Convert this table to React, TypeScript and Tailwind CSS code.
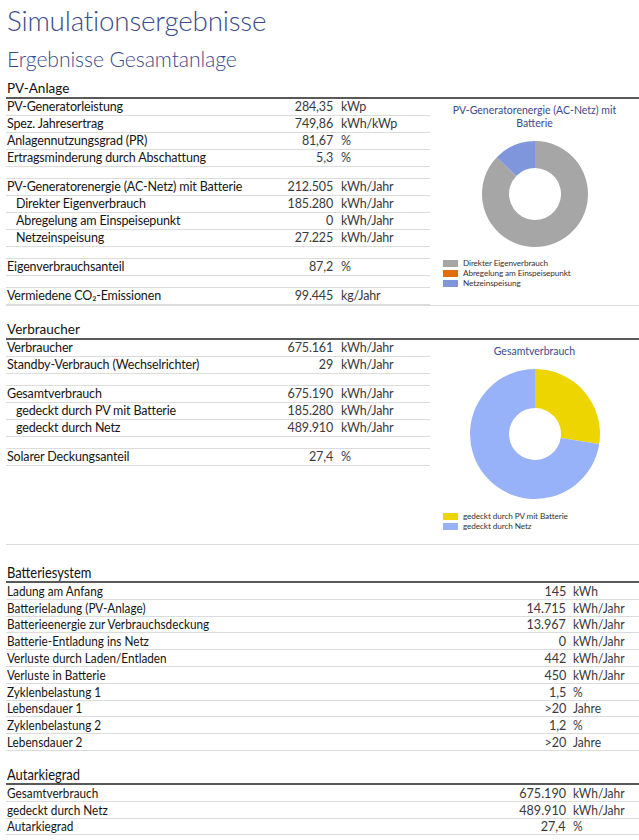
import React from "react"

type Row = { label: string; value: string; unit: string; indent?: boolean } | "gap"

const PV_ROWS: Row[] = [
  { label: "PV-Generatorleistung", value: "284,35", unit: "kWp" },
  { label: "Spez. Jahresertrag", value: "749,86", unit: "kWh/kWp" },
  { label: "Anlagennutzungsgrad (PR)", value: "81,67", unit: "%" },
  { label: "Ertragsminderung durch Abschattung", value: "5,3", unit: "%" },
  "gap",
  { label: "PV-Generatorenergie (AC-Netz) mit Batterie", value: "212.505", unit: "kWh/Jahr" },
  { label: "Direkter Eigenverbrauch", value: "185.280", unit: "kWh/Jahr", indent: true },
  { label: "Abregelung am Einspeisepunkt", value: "0", unit: "kWh/Jahr", indent: true },
  { label: "Netzeinspeisung", value: "27.225", unit: "kWh/Jahr", indent: true },
  "gap",
  { label: "Eigenverbrauchsanteil", value: "87,2", unit: "%" },
  "gap",
  { label: "Vermiedene CO₂-Emissionen", value: "99.445", unit: "kg/Jahr" },
]

const VERBRAUCHER_ROWS: Row[] = [
  { label: "Verbraucher", value: "675.161", unit: "kWh/Jahr" },
  { label: "Standby-Verbrauch (Wechselrichter)", value: "29", unit: "kWh/Jahr" },
  "gap",
  { label: "Gesamtverbrauch", value: "675.190", unit: "kWh/Jahr" },
  { label: "gedeckt durch PV mit Batterie", value: "185.280", unit: "kWh/Jahr", indent: true },
  { label: "gedeckt durch Netz", value: "489.910", unit: "kWh/Jahr", indent: true },
  "gap",
  { label: "Solarer Deckungsanteil", value: "27,4", unit: "%" },
]

const BATTERIE_ROWS = [
  { label: "Ladung am Anfang", value: "145", unit: "kWh" },
  { label: "Batterieladung (PV-Anlage)", value: "14.715", unit: "kWh/Jahr" },
  { label: "Batterieenergie zur Verbrauchsdeckung", value: "13.967", unit: "kWh/Jahr" },
  { label: "Batterie-Entladung ins Netz", value: "0", unit: "kWh/Jahr" },
  { label: "Verluste durch Laden/Entladen", value: "442", unit: "kWh/Jahr" },
  { label: "Verluste in Batterie", value: "450", unit: "kWh/Jahr" },
  { label: "Zyklenbelastung 1", value: "1,5", unit: "%" },
  { label: "Lebensdauer 1", value: ">20", unit: "Jahre" },
  { label: "Zyklenbelastung 2", value: "1,2", unit: "%" },
  { label: "Lebensdauer 2", value: ">20", unit: "Jahre" },
]

const AUTARKIE_ROWS = [
  { label: "Gesamtverbrauch", value: "675.190", unit: "kWh/Jahr" },
  { label: "gedeckt durch Netz", value: "489.910", unit: "kWh/Jahr" },
  { label: "Autarkiegrad", value: "27,4", unit: "%" },
]

function SectionHeading({ title, narrow }: { title: string; narrow?: boolean }) {
  return (
    <div className="border-b-2 border-[#595959] h-[19px] flex items-end pl-px">
      <span
        className={
          narrow
            ? "text-[15px] leading-[17px] text-[#111] origin-left scale-x-[0.86] inline-block whitespace-nowrap"
            : "text-[13.5px] leading-[17px] text-[#111]"
        }
      >
        {title}
      </span>
    </div>
  )
}

function WideTable({ rows }: { rows: Row[] }) {
  return (
    <div className="w-[424px]">
      {rows.map((r, i) =>
        r === "gap" ? (
          <div key={i} className="h-[12px] border-b border-[#dcdcdc]" />
        ) : (
          <div
            key={i}
            className="h-[17px] border-b border-[#dcdcdc] flex items-center text-[12.5px] tracking-[-0.15px] leading-none"
          >
            <span className={"flex-1 text-[#151515] " + (r.indent ? "pl-[10px]" : "pl-px")}>{r.label}</span>
            <span className="w-[80px] text-right text-[#3a3a3a]">{r.value}</span>
            <span className="w-[97px] pl-[8px] text-[#3a3a3a]">{r.unit}</span>
          </div>
        )
      )}
    </div>
  )
}

function NarrowTable({ rows }: { rows: { label: string; value: string; unit: string }[] }) {
  return (
    <div>
      {rows.map((r, i) => (
        <div key={i} className="h-[16.8px] border-b border-[#dcdcdc] flex items-center text-[14px] leading-none">
          <span className="flex-1 pl-px">
            <span className="inline-block origin-left scale-x-[0.84] whitespace-nowrap text-[#151515]">{r.label}</span>
          </span>
          <span className="w-[80px] text-right">
            <span className="inline-block origin-right scale-x-[0.9] whitespace-nowrap text-[#3a3a3a]">{r.value}</span>
          </span>
          <span className="w-[73px] pl-[7px]">
            <span className="inline-block origin-left scale-x-[0.86] whitespace-nowrap text-[#3a3a3a]">{r.unit}</span>
          </span>
        </div>
      ))}
    </div>
  )
}

type Slice = { value: number; color: string }

function Donut({ r, ir, slices }: { r: number; ir: number; slices: Slice[] }) {
  const size = r * 2 + 2
  const c = size / 2
  const total = slices.reduce((s, x) => s + x.value, 0)
  let a0 = 0
  const pt = (rad: number, a: number) => `${c + rad * Math.sin(a)} ${c - rad * Math.cos(a)}`
  return (
    <svg width={size} height={size} viewBox={`0 0 ${size} ${size}`}>
      {slices.map((s, i) => {
        const a1 = a0 + (s.value / total) * Math.PI * 2
        const large = a1 - a0 > Math.PI ? 1 : 0
        const d = `M ${pt(r, a0)} A ${r} ${r} 0 ${large} 1 ${pt(r, a1)} L ${pt(ir, a1)} A ${ir} ${ir} 0 ${large} 0 ${pt(ir, a0)} Z`
        a0 = a1
        if (s.value === 0) return null
        return <path key={i} d={d} fill={s.color} />
      })}
    </svg>
  )
}

function Legend({ items }: { items: { label: string; color: string }[] }) {
  return (
    <div className="flex flex-col">
      {items.map((it) => (
        <div key={it.label} className="h-[10px] flex items-center gap-[5px]">
          <span className="w-[15px] h-[7px]" style={{ backgroundColor: it.color }} />
          <span className="text-[8.2px] leading-none text-[#333] tracking-[-0.1px]">{it.label}</span>
        </div>
      ))}
    </div>
  )
}

export default function App() {
  return (
    <div className="w-[639px] h-[840px] bg-white pl-[6px] font-['Lato',sans-serif] overflow-hidden">
      <div className="pt-[5px] pl-px text-[27.8px] leading-[31px] font-light text-[#3b4a8c] tracking-[-0.2px]">
        Simulationsergebnisse
      </div>
      <div className="mt-[11px] pl-px text-[21.2px] leading-[24px] font-light text-[#3b4a8c] tracking-[-0.1px]">
        Ergebnisse Gesamtanlage
      </div>

      <div className="mt-[9px]">
        <SectionHeading title="PV-Anlage" />
        <div className="flex border-b border-[#dcdcdc]">
          <WideTable rows={PV_ROWS} />
          <div className="w-[209px] h-[206px] flex flex-col items-center">
            <div className="pt-[5px] text-center text-[10.5px] leading-[13px] text-[#3b4a8c]">
              PV-Generatorenergie (AC-Netz) mit
              <br />
              Batterie
            </div>
            <div className="mt-[10px]">
              <Donut
                r={53}
                ir={26}
                slices={[
                  { value: 185280, color: "#a6a6a6" },
                  { value: 0, color: "#e36c0a" },
                  { value: 27225, color: "#7f96dc" },
                ]}
              />
            </div>
            <div className="mt-[10px] self-start pl-[13px]">
              <Legend
                items={[
                  { label: "Direkter Eigenverbrauch", color: "#a6a6a6" },
                  { label: "Abregelung am Einspeisepunkt", color: "#e36c0a" },
                  { label: "Netzeinspeisung", color: "#7f96dc" },
                ]}
              />
            </div>
          </div>
        </div>
      </div>

      <div className="mt-[15px]">
        <SectionHeading title="Verbraucher" />
        <div className="flex border-b border-[#dcdcdc]">
          <div className="self-start">
            <WideTable rows={VERBRAUCHER_ROWS} />
          </div>
          <div className="w-[209px] h-[204px] flex flex-col items-center">
            <div className="pt-[5px] text-center text-[10.5px] leading-[13px] text-[#3b4a8c]">Gesamtverbrauch</div>
            <div className="mt-[10px]">
              <Donut
                r={65}
                ir={26}
                slices={[
                  { value: 185280, color: "#ecd500" },
                  { value: 489910, color: "#98b2fa" },
                ]}
              />
            </div>
            <div className="mt-[11px] self-start pl-[13px]">
              <Legend
                items={[
                  { label: "gedeckt durch PV mit Batterie", color: "#ecd500" },
                  { label: "gedeckt durch Netz", color: "#98b2fa" },
                ]}
              />
            </div>
          </div>
        </div>
      </div>

      <div className="mt-[19px]">
        <SectionHeading title="Batteriesystem" narrow />
        <NarrowTable rows={BATTERIE_ROWS} />
      </div>

      <div className="mt-[15px]">
        <SectionHeading title="Autarkiegrad" narrow />
        <NarrowTable rows={AUTARKIE_ROWS} />
      </div>
    </div>
  )
}
